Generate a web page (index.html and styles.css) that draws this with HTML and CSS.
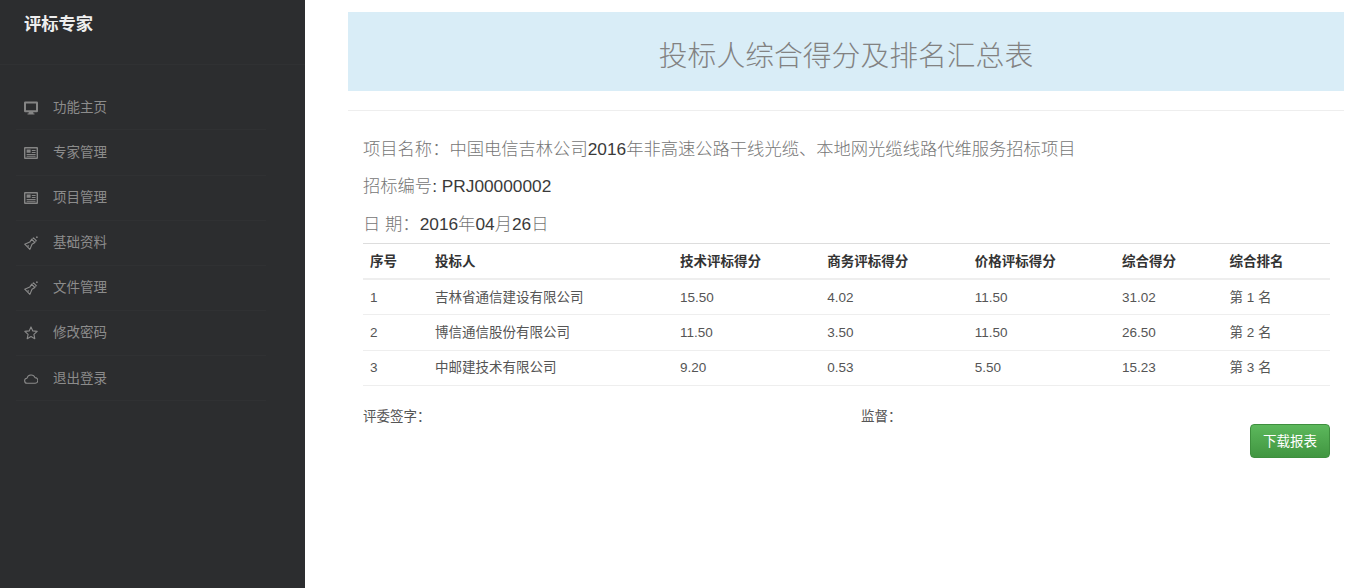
FILE: index.html
```html
<!DOCTYPE html>
<html lang="zh">
<head>
<meta charset="utf-8">
<title>投标人综合得分及排名汇总表</title>
<link rel="stylesheet" href="styles.css">
</head>
<body>
<aside class="sidebar">
  <div class="brand">评标专家</div>
  <nav class="nav">
    <a class="nav-item"><svg class="icon" viewBox="0 0 14 14"><path class="solid" d="M1.200 .6h11.600A1.200 1.200 0 0 1 14 1.800v8.200a1.200 1.200 0 0 1-1.200 1.200H9.200l.3 1.200h1v1H3.500v-1h1l.3-1.200H1.200A1.200 1.200 0 0 1 0 10V1.800A1.200 1.200 0 0 1 1.200 .6zM2 2.600v6.600h10V2.600z"/></svg><span>功能主页</span></a>
    <a class="nav-item"><svg class="icon" viewBox="0 0 14 14"><path class="solid" d="M1 1h12a1 1 0 0 1 1 1v10a1 1 0 0 1-1 1H1a1 1 0 0 1-1-1V2a1 1 0 0 1 1-1zM1.400 2.400v9.200h11.200V2.400zM2.600 3.400h4v3.400h-4zM7.800 4h3.800v1.100H7.800zM7.800 6h3.800v1.100H7.800zM2.600 8h9v1.100h-9zM2.600 9.800h9v.9h-9z"/></svg><span>专家管理</span></a>
    <a class="nav-item"><svg class="icon" viewBox="0 0 14 14"><path class="solid" d="M1 1h12a1 1 0 0 1 1 1v10a1 1 0 0 1-1 1H1a1 1 0 0 1-1-1V2a1 1 0 0 1 1-1zM1.400 2.400v9.200h11.200V2.400zM2.600 3.400h4v3.400h-4zM7.800 4h3.800v1.100H7.800zM7.800 6h3.800v1.100H7.800zM2.600 8h9v1.100h-9zM2.600 9.800h9v.9h-9z"/></svg><span>项目管理</span></a>
    <a class="nav-item"><svg class="icon" viewBox="0 0 14 14"><path class="line" d="M.7 8.200 5.800 6.100 7.600 3.200l3.300 3.300-2.900 1.800-2.100 5.100zM3.700 9.300l1.100 1.100"/><path class="line" d="M8.600 2.700l.9-.9 2.800 2.800-.9.9"/><circle class="solid" cx="12.900" cy="1.200" r=".9"/></svg><span>基础资料</span></a>
    <a class="nav-item"><svg class="icon" viewBox="0 0 14 14"><path class="line" d="M.7 8.200 5.800 6.100 7.600 3.200l3.300 3.300-2.900 1.800-2.100 5.100zM3.700 9.300l1.100 1.100"/><path class="line" d="M8.600 2.700l.9-.9 2.800 2.800-.9.9"/><circle class="solid" cx="12.900" cy="1.200" r=".9"/></svg><span>文件管理</span></a>
    <a class="nav-item"><svg class="icon" viewBox="0 0 14 14"><path class="line" d="M7 .9 8.800 4.900l4.400.5-3.300 2.900.9 4.400L7 10.500l-3.800 2.200.9-4.400L.8 5.400l4.400-.5z"/></svg><span>修改密码</span></a>
    <a class="nav-item"><svg class="icon" viewBox="0 0 14 14"><path class="line" d="M3.300 11.200a2.500 2.500 0 0 1-.3-5 4.200 4.200 0 0 1 8-.6 2.800 2.800 0 0 1 .1 5.600z"/></svg><span>退出登录</span></a>
  </nav>
</aside>
<main class="main">
  <h1 class="banner">投标人综合得分及排名汇总表</h1>
  <hr class="rule">
  <section class="report">
    <p class="meta meta-first">项目名称：中国电信吉林公司<span class="latin">2016</span>年非高速公路干线光缆、本地网光缆线路代维服务招标项目</p>
    <p class="meta">招标编号<span class="latin">: PRJ00000002</span></p>
    <p class="meta">日 期：<span class="latin">2016</span>年<span class="latin">04</span>月<span class="latin">26</span>日</p>
    <table class="scores">
      <colgroup>
        <col class="c1"><col class="c2"><col class="c3"><col class="c3"><col class="c3"><col class="c4"><col class="c4">
      </colgroup>
      <thead>
        <tr><th>序号</th><th>投标人</th><th>技术评标得分</th><th>商务评标得分</th><th>价格评标得分</th><th>综合得分</th><th>综合排名</th></tr>
      </thead>
      <tbody>
        <tr><td>1</td><td>吉林省通信建设有限公司</td><td>15.50</td><td>4.02</td><td>11.50</td><td>31.02</td><td>第 1 名</td></tr>
        <tr><td>2</td><td>博信通信股份有限公司</td><td>11.50</td><td>3.50</td><td>11.50</td><td>26.50</td><td>第 2 名</td></tr>
        <tr><td>3</td><td>中邮建技术有限公司</td><td>9.20</td><td>0.53</td><td>5.50</td><td>15.23</td><td>第 3 名</td></tr>
      </tbody>
    </table>
    <div class="signs">
      <span class="sign sign-a">评委签字：</span>
      <span class="sign">监督：</span>
    </div>
    <div class="actions"><button class="btn" type="button">下载报表</button></div>
  </section>
</main>
</body>
</html>
```
FILE: styles.css
```css
* { box-sizing: border-box; }
html, body { margin: 0; height: 100%; }
body {
  display: flex;
  min-height: 588px;
  background: #fff;
  color: #333;
  font-family: "Liberation Sans", "Noto Sans CJK SC", sans-serif;
  font-size: 13.5px;
  overflow: hidden;
}
.sidebar { flex: 0 0 305px; background: #2c2d2f; }
.brand {
  height: 65px;
  padding: 13px 0 0 24px;
  border-bottom: 1px solid #303133;
  color: #eee;
  font-size: 17.3px;
  font-weight: 700;
  line-height: 22px;
}
.nav { display: flex; flex-direction: column; margin: 20.4px 39px 0 16px; }
.nav-item {
  display: flex;
  align-items: center;
  height: 45.1px;
  padding: 1px 0 0 8px;
  border-bottom: 1px solid #303133;
  color: #8c8c8c;
  line-height: 20px;
}
.icon { flex: 0 0 14px; width: 14px; height: 14px; margin-right: 15px; }
.solid { fill: #858585; fill-rule: evenodd; }
.line { fill: none; stroke: #8a8a8a; stroke-width: 1.1; stroke-linejoin: round; }
.main { flex: 1; padding: 12px 21px 0 43px; }
.banner {
  margin: 0;
  height: 79px;
  background: #d9edf7;
  color: #828282;
  font-size: 28.8px;
  font-weight: 300;
  line-height: 88px;
  text-align: center;
}
.rule { margin: 19px 0 0; border: 0; border-top: 1px solid #eee; }
.report { padding: 0 14px 0 15px; }
.meta { margin: 0; height: 37.5px; color: #767676; font-size: 17.3px; font-weight: 300; line-height: 37.5px; }
.latin { color: #3a3a3a; font-weight: 400; }
.meta-first { margin-top: 19.5px; }
.scores { width: 100%; margin-top: -0.5px; border-collapse: collapse; table-layout: fixed; border-top: 1px solid #ddd; }
.c1 { width: 65px; }
.c2 { width: 245px; }
.c3 { width: 147.3px; }
.c4 { width: 107.5px; }
th, td { text-align: left; line-height: 20px; }
th { height: 36px; padding: 2px 7px 0; border-bottom: 2px solid #eee; color: #333; font-weight: 700; }
td { height: 35.5px; padding: 1.4px 7px 0; border-bottom: 1px solid #eee; color: #555; }
.signs { display: flex; margin-top: 21px; line-height: 20px; color: #555; }
.sign-a { width: 498px; }
.actions { display: flex; justify-content: flex-end; margin-top: -3px; }
.btn {
  width: 80px;
  height: 34px;
  padding: 0 0 2px;
  border: 1px solid #3e8f3e;
  border-radius: 4px;
  background: linear-gradient(#5cb85c, #419641);
  color: #fff;
  font: inherit;
}
```
